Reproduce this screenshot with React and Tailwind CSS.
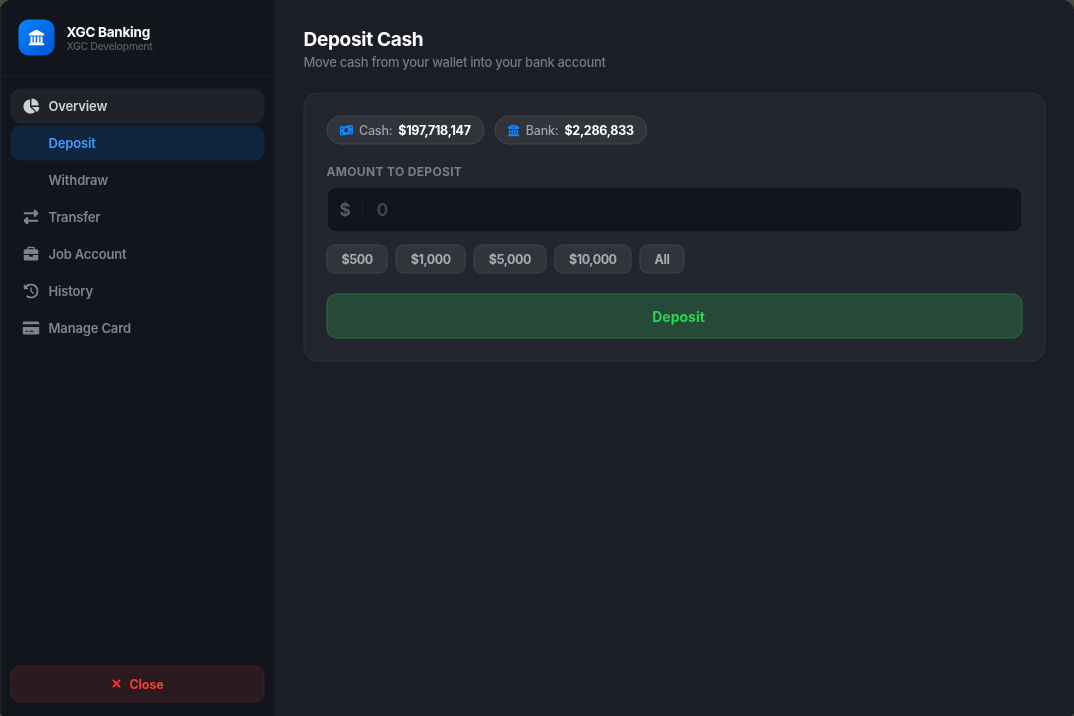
import { useState } from "react";
import {
  FaBriefcase,
  FaBuildingColumns,
  FaChartPie,
  FaClockRotateLeft,
  FaCreditCard,
  FaLandmark,
  FaMoneyBillWave,
  FaRightLeft,
  FaXmark,
} from "react-icons/fa6";

const navItems = [
  { id: "overview", label: "Overview", icon: FaChartPie, size: "size-[17px]" },
  { id: "deposit", label: "Deposit" },
  { id: "withdraw", label: "Withdraw" },
  { id: "transfer", label: "Transfer", icon: FaRightLeft, size: "size-[15px]" },
  { id: "job", label: "Job Account", icon: FaBriefcase, size: "size-[15px]" },
  { id: "history", label: "History", icon: FaClockRotateLeft, size: "size-[15px]" },
  { id: "card", label: "Manage Card", icon: FaCreditCard, size: "size-[17px]" },
];

const cash = 197718147;
const bank = 2286833;
const quickAmounts = [500, 1000, 5000, 10000];

const formatMoney = (value) => "$" + value.toLocaleString("en-US");

function NavItem({ item, active, hovered, onClick }) {
  const Icon = item.icon;

  let state = "text-[#818388]";
  if (hovered) state = "bg-[#202229] text-[#d0d0d2]";
  if (active) state = "bg-[#10253d] text-[#409cff]";

  return (
    <button
      onClick={onClick}
      className={`flex h-[35px] w-full shrink-0 items-center gap-[9px] rounded-[10px] pl-3 text-left text-[13px] font-semibold tracking-[-0.15px] ${state}`}
    >
      <span className="flex w-[17px] justify-center">
        {Icon && <Icon className={item.size} />}
      </span>
      <span className="pt-px">{item.label}</span>
    </button>
  );
}

function BalancePill({ icon: Icon, iconSize, label, value }) {
  return (
    <div className="flex h-[29px] items-center rounded-full border border-[#43454c] bg-[#32343c] pr-[13px] pl-3 text-[12.5px]">
      <Icon className={`mr-1.5 text-[#0a84ff] ${iconSize}`} />
      <span className="mr-1.5 pt-px font-medium tracking-[-0.2px] text-[#a0a1a5]">
        {label}:
      </span>
      <span className="pt-px font-bold tracking-[-0.27px] text-white">
        {formatMoney(value)}
      </span>
    </div>
  );
}

function QuickButton({ children, onClick }) {
  return (
    <button
      onClick={onClick}
      className="h-[29px] rounded-lg border border-[#43454c] bg-[#32343c] px-3.5 pt-px text-[12.5px] font-bold tracking-[-0.45px] text-[#aaabae]"
    >
      {children}
    </button>
  );
}

function App() {
  const [page, setPage] = useState("deposit");
  const [amount, setAmount] = useState("");

  return (
    <div className="h-screen overflow-hidden bg-[#47493f] font-['Inter',sans-serif]">
      <div className="flex h-[calc(100%+1px)] w-[calc(100%+1px)] -translate-[0.5px] transform-gpu overflow-hidden rounded-[14px] rounded-b-[6px] bg-[#1b1d27]">
        <aside className="flex w-[275px] shrink-0 flex-col border-r border-l-2 border-[#1d1f27] bg-[#12151c]">
          <div className="flex h-[77px] shrink-0 items-center gap-3 border-b border-[#1e2028] pb-px pl-[17px]">
            <div className="flex size-9 items-center justify-center rounded-[10px] bg-linear-to-br from-[#0a84ff] to-[#0055d4] text-[16px] text-white">
              <FaLandmark />
            </div>
            <div className="pt-0.5">
              <div className="text-[13.5px] leading-[16px] font-bold tracking-[-0.25px] text-white">
                XGC Banking
              </div>
              <div className="text-[10.5px] leading-[13px] font-medium tracking-[-0.38px] text-[#595b60]">
                XGC Development
              </div>
            </div>
          </div>

          <nav className="flex flex-1 flex-col gap-0.5 px-[9px] pt-3">
            {navItems.map((item) => (
              <NavItem
                key={item.id}
                item={item}
                active={page === item.id}
                hovered={item.id === "overview"}
                onClick={() => setPage(item.id)}
              />
            ))}
          </nav>

          <div className="px-[9px] pb-[14px]">
            <button className="flex h-[37px] w-full items-center justify-center gap-[7px] rounded-[10px] border border-[#4d1f24] bg-[#2b1a20] pr-px text-[12.5px] font-bold tracking-[-0.1px] text-[#ff3b30]">
              <FaXmark className="mb-px size-[12px] stroke-current stroke-[20px]" />
              <span className="pt-[2px]">Close</span>
            </button>
          </div>
        </aside>

        <main className="min-w-0 flex-1 pt-7 pr-[29px] pl-[29px]">
          <h1 className="text-[19px] leading-6 font-bold tracking-[-0.3px] text-white">
            Deposit Cash
          </h1>
          <p className="text-[13px] leading-5 font-medium tracking-[-0.32px] text-[#76777d]">
            Move cash from your wallet into your bank account
          </p>

          <section className="mt-[21px] rounded-[14px] border border-[#2f3139] bg-[#24262f] p-[22px]">
            <div className="flex gap-2.5">
              <BalancePill
                icon={FaMoneyBillWave}
                iconSize="size-[13.5px]"
                label="Cash"
                value={cash}
              />
              <BalancePill
                icon={FaBuildingColumns}
                iconSize="size-[12px]"
                label="Bank"
                value={bank}
              />
            </div>

            <label
              htmlFor="amount"
              className="mt-[19px] block text-[12px] leading-4 font-bold tracking-[0.33px] text-[#7c7d82] uppercase"
            >
              Amount to deposit
            </label>

            <div className="mt-[7px] flex h-[46px] items-center rounded-[10px] border border-[#2c2e36] bg-[#12151c] pl-3 text-[17px] font-bold">
              <span className="pt-px text-[#595b60]">$</span>
              <span className="mr-3.5 ml-[11px] h-5 w-px bg-[#1f2229]" />
              <input
                id="amount"
                value={amount}
                onChange={(e) => setAmount(e.target.value)}
                placeholder="0"
                className="min-w-0 flex-1 bg-transparent pt-px text-white outline-none placeholder:text-[#414349]"
              />
            </div>

            <div className="mt-3 flex gap-2">
              {quickAmounts.map((value) => (
                <QuickButton key={value} onClick={() => setAmount(String(value))}>
                  {formatMoney(value)}
                </QuickButton>
              ))}
              <QuickButton onClick={() => setAmount(String(cash))}>All</QuickButton>
            </div>

            <button className="mt-5 h-[45px] w-full rounded-[10px] border border-[#276e40] bg-[#264938] pl-2 text-[14px] font-bold text-[#30d158]">
              Deposit
            </button>
          </section>
        </main>
      </div>
    </div>
  );
}

export default App;
